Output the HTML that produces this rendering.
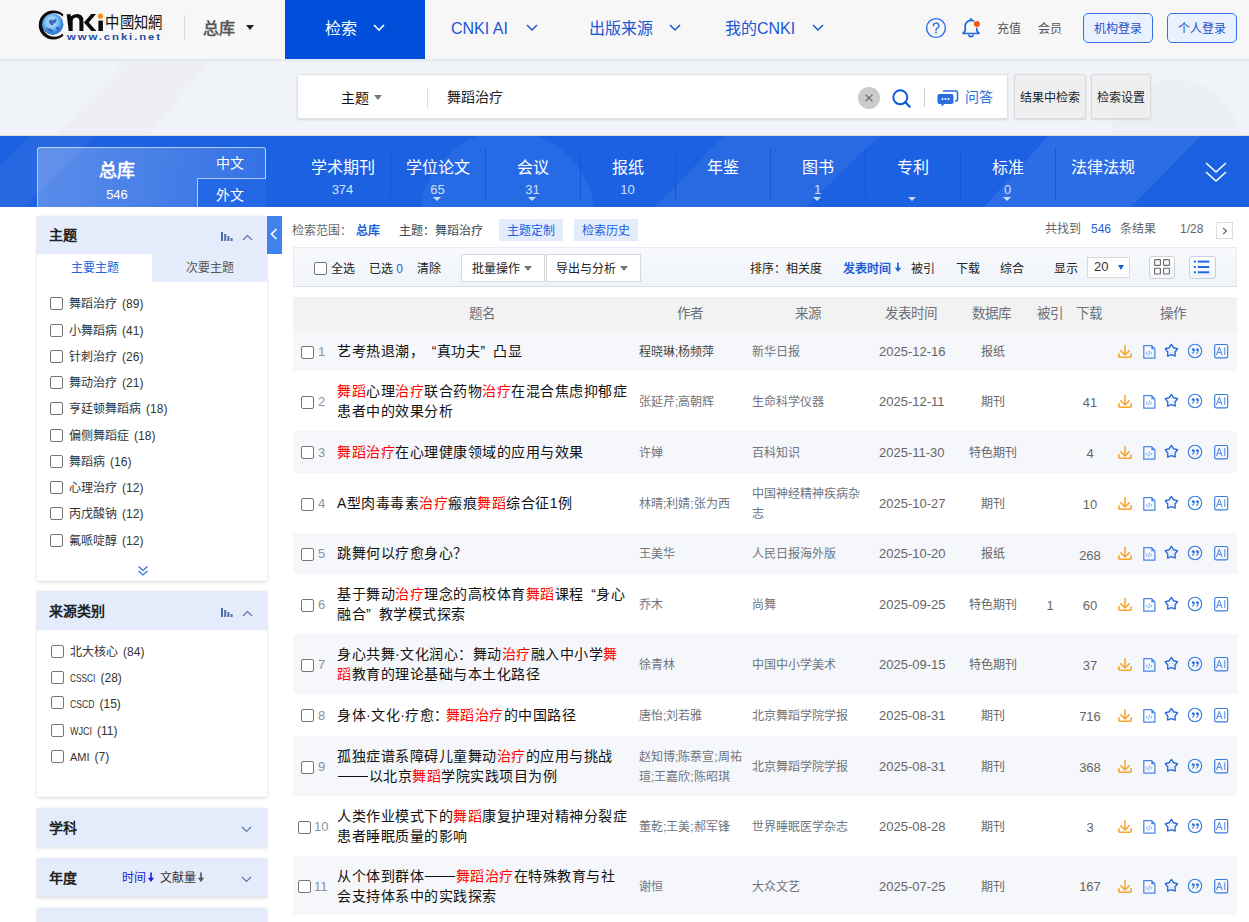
<!DOCTYPE html>
<html lang="zh-CN"><head><meta charset="utf-8"><title>CNKI</title>
<style>
*{margin:0;padding:0;box-sizing:border-box}
html,body{width:1249px;height:922px;overflow:hidden}
body{position:relative;font-family:"Liberation Sans",sans-serif;background:#fff;color:#333;font-size:12px}
.a{position:absolute;white-space:nowrap}
svg{position:absolute;overflow:visible}
/* header */
#hdr{position:absolute;left:0;top:0;width:1249px;height:59px;background:#f7f7f7;}
.nav{font-size:16px;color:#1a57d6;line-height:20px;top:19px}
.btn1{position:absolute;top:13px;height:30px;width:70px;border:1px solid #3f7fe3;border-radius:6px;background:#eaf1fe;color:#1c52c6;font-size:12px;line-height:30px;text-align:center;border-color:#3374e2;border-radius:5px}
/* search band */
#sband{position:absolute;left:0;top:59px;width:1249px;height:77px;background:#f0f3f8}
#sbox{position:absolute;left:297px;top:74px;width:711px;height:45px;background:#fff;border:1px solid #dde1e6;border-radius:2px;box-shadow:0 1px 2px rgba(0,0,0,.12)}
.gbtn{position:absolute;top:74px;height:45px;background:#efefef;border:1px solid #d9d9d9;border-radius:2px;box-shadow:0 1px 2px rgba(0,0,0,.1);font-size:12px;color:#222;line-height:46px;text-align:center}
/* blue band */
#bband{position:absolute;left:0;top:136px;width:1249px;height:71px;background:#1c61e2;overflow:hidden}
.cat{position:absolute;top:0;width:95px;height:71px;text-align:center;color:#fff}
.cat .t{position:absolute;left:0;width:95px;top:22px;font-size:16px;line-height:20px}
.cat .n{position:absolute;left:0;width:95px;top:46px;font-size:13px;line-height:16px;color:#cfe0fb}
.cat .tri{position:absolute;left:43px;top:61px;width:0;height:0;border-left:4px solid transparent;border-right:4px solid transparent;border-top:4px solid #c9dbf8}
.div{position:absolute;top:13px;width:1px;height:50px;background:#1553d2}

/* sidebar */
.panel{position:absolute;left:37px;width:230px;background:#fff;box-shadow:0 1px 3px rgba(0,0,0,.16)}
.phd{position:absolute;left:37px;width:230px;background:#e4ecfb}
.phd2{background:#e4ecfb}
.ph{font-size:14px;line-height:20px;font-weight:bold;color:#222}
.cb{position:absolute;width:13px;height:13px;border:1px solid #767676;border-radius:2px;background:#fff}
.si{font-size:12px;line-height:18px;color:#333;word-spacing:1.7px}
.nr{display:inline-block;font-size:11px;transform-origin:0 50%}
/* main */
.tag{position:absolute;top:219px;width:64px;height:22px;background:#e4ecfb;color:#1a5ee6;font-size:12px;line-height:24px;text-align:center}
.tb{top:260px;font-size:12px;line-height:18px;color:#222}
.tri5{top:266px;width:0;height:0;border-left:4.5px solid transparent;border-right:4.5px solid transparent;border-top:5px solid #777}
.th{top:305px;font-size:13.5px;line-height:18px;color:#6b707a}
.row{position:absolute;left:0;width:944px}
.row.g{background:#f5f7fa}
.num{font-size:13px;line-height:18px;color:#8a93a3}
.ttl{font-size:14px;line-height:20px;color:#111;letter-spacing:.5px}
.hl{color:#f00}
.lq{margin-left:7.8px}
.dash{display:inline-block;width:29.6px;height:1.2px;background:#111;vertical-align:middle;margin:0 1px 1px 1px}
.rq{margin-right:7.8px}
.au{font-size:12px;line-height:20px;color:#6f7480}
.au.dk{color:#444}
.src{font-size:12px;line-height:20px;color:#6f7480;white-space:nowrap}
.dt{font-size:13px;line-height:18px;color:#666}
.db{width:72px;text-align:center;font-size:12px;line-height:18px;color:#666}
.ci{width:24px;text-align:center;font-size:13px;line-height:18px;color:#666}
.dl{width:60px;text-align:center;font-size:13px;line-height:18px;color:#666}
.op{position:absolute}
.arr{font-family:"Liberation Sans",sans-serif}
</style></head><body>
<svg width="0" height="0" style="position:absolute;left:0;top:0">
<defs>
<symbol id="i-bar" viewBox="0 0 12 9"><g fill="#4f6ea8"><rect x="0" y="0" width="2" height="9"/><rect x="3.2" y="2" width="2" height="7"/><rect x="6.4" y="4" width="2" height="5"/><rect x="9.6" y="6.2" width="2" height="2.8"/></g></symbol>
<symbol id="i-dl" viewBox="0 0 16 16"><path d="M8 2 V12.2 M3.4 7.4 L8 12 L12.6 7.4" fill="none" stroke="#f7a52c" stroke-width="1.5"/><path d="M1.9 10.2 V13.3 Q1.9 14.2 2.8 14.2 H13.3 Q14.2 14.2 14.2 13.3 V10.2" fill="none" stroke="#f7a52c" stroke-width="1.6"/></symbol>
<symbol id="i-html" viewBox="0 0 16 16"><path d="M2.8 2.6 H10.6 L13.9 5.9 V15.2 H2.8 Z" fill="none" stroke="#4a86e8" stroke-width="1.25" stroke-linejoin="round"/><path d="M10.3 2.6 L13.9 6.2 H10.3 Z" fill="#4a86e8"/><path d="M6.6 8.6 L4.9 10.1 L6.6 11.6 M9.4 8.6 L11.1 10.1 L9.4 11.6 M8.7 7.4 L7.5 12.6" fill="none" stroke="#80aef0" stroke-width=".9"/></symbol>
<symbol id="i-star" viewBox="0 0 16 16"><path d="M8.4 1.4 L10.63 4.73 L14.5 5.8 L12.01 8.97 L12.2 13 L8.4 11.6 L4.6 13 L4.79 8.97 L2.3 5.8 L6.17 4.73 Z" fill="none" stroke="#2f6fdc" stroke-width="1.45" stroke-linejoin="round"/><g fill="#9dbcf0"><circle cx="8.4" cy="5.6" r=".5"/><circle cx="6.8" cy="7.4" r=".5"/><circle cx="10" cy="7.4" r=".5"/><circle cx="7.5" cy="9.3" r=".5"/><circle cx="9.3" cy="9.3" r=".5"/></g></symbol>
<symbol id="i-quote" viewBox="0 0 16 16"><circle cx="8" cy="8" r="6.7" fill="none" stroke="#3a7be0" stroke-width="1.1"/><circle cx="6.2" cy="6.6" r="1.35" fill="#2f6fdc"/><circle cx="10.3" cy="6.6" r="1.35" fill="#2f6fdc"/><path d="M7.4 6.7 Q7.3 9.2 5.3 10.5 M11.5 6.7 Q11.4 9.2 9.4 10.5" fill="none" stroke="#2f6fdc" stroke-width="1.05"/></symbol>
<symbol id="i-ai" viewBox="0 0 16 16"><rect x="1.7" y="1.5" width="13" height="13.4" rx="1.6" fill="none" stroke="#3a7be0" stroke-width="1.15"/><path d="M3.4 12.1 L6.3 4.2 L9.1 12.1 M4.5 9.4 H8.1 M11.8 4.2 V12.1" fill="none" stroke="#4a86e8" stroke-width="1"/></symbol>
</defs></svg>


<!-- ============ HEADER ============ -->
<div id="hdr"></div>
<!-- logo -->
<svg style="left:0;top:0;z-index:2" width="170" height="45" viewBox="0 0 170 45">
  <defs>
    <radialGradient id="glb" cx="45%" cy="40%" r="62%">
      <stop offset="0" stop-color="#d8f0ff"/><stop offset=".5" stop-color="#7cc0f5"/><stop offset=".85" stop-color="#2f7ad6"/><stop offset="1" stop-color="#3b86de"/>
    </radialGradient>
  </defs>
  <path d="M63.5 14.5 A 14.6 14.6 0 1 0 63.5 35.5 L 62.5 33.5 A 11.8 11.8 0 1 1 62.5 16.5 Z" fill="#0d0d0d"/>
  <circle cx="52.8" cy="24.3" r="10.6" fill="url(#glb)"/>
  <path d="M49 20.5 l2.5 -1.2 l2 1 l1.8 -1.5 l1.4 1 l-0.6 2.4 l-2.2 1.2 l-1.3 2.2 l-2.2 -0.8 l-1.6 -2.2 z M46 27 l2 1.5 l3 0.5 l2.5 2 l-2 0.8 l-3.5 -1.3 z M55.5 27.5 l2.5 -0.8 l1.5 2 l-2 1.6 z" fill="#1746a8" opacity=".75"/>
  <path d="M66.7 14.3 h4 v2.2 q2.6 -2.6 6.2 -2.6 q6.5 0 6.5 6.8 V31 h-4 V21.2 q0 -3.8 -3.2 -3.8 q-3.5 0 -3.5 4.2 V31 h-4 Z" fill="#0a0a0a"/>
  <path d="M96 14.1 h-4.8 l-7.2 8.5 l7.4 8.4 h5 l-7.6 -8.4 Z" fill="#0a0a0a"/>
  <rect x="98.4" y="20.6" width="4.5" height="10.4" fill="#0a0a0a"/>
  <circle cx="100.4" cy="16.2" r="2.6" fill="#f5901e"/>
  <text x="105.5" y="28.5" font-family="Liberation Serif, serif" font-size="14" font-weight="300" fill="#111" textLength="57" lengthAdjust="spacingAndGlyphs" transform="translate(0,-4.3) scale(1,1.15)">中國知網</text>
  <text x="67" y="39.8" font-family="Liberation Sans, sans-serif" font-weight="bold" font-size="9.5" fill="#1f4aa0" textLength="95" lengthAdjust="spacingAndGlyphs" letter-spacing="1.6">www.cnki.net</text>
</svg>
<div class="a" style="left:184px;top:15px;width:1px;height:25px;background:#d3dcea"></div>
<div class="a" style="left:203px;top:19px;font-size:16px;line-height:20px;color:#5a5a5a;font-weight:bold">总库</div>
<div class="a" style="left:246px;top:25px;width:0;height:0;border-left:4px solid transparent;border-right:4px solid transparent;border-top:5px solid #222"></div>

<div class="a" style="left:285px;top:0;width:140px;height:59px;background:#004fda"></div>
<div class="a" style="left:325px;top:19px;font-size:16px;line-height:20px;color:#fff">检索</div>
<svg style="left:373px;top:24px" width="12" height="8"><path d="M1 1 L6 6 L11 1" fill="none" stroke="#fff" stroke-width="1.6"/></svg>

<div class="a nav" style="left:451px">CNKI AI</div>
<svg style="left:526px;top:24px" width="12" height="8"><path d="M1 1 L6 6 L11 1" fill="none" stroke="#1b55c9" stroke-width="1.5"/></svg>
<div class="a nav" style="left:589px">出版来源</div>
<svg style="left:669px;top:24px" width="12" height="8"><path d="M1 1 L6 6 L11 1" fill="none" stroke="#1b55c9" stroke-width="1.5"/></svg>
<div class="a nav" style="left:725px">我的CNKI</div>
<svg style="left:812px;top:24px" width="12" height="8"><path d="M1 1 L6 6 L11 1" fill="none" stroke="#1b55c9" stroke-width="1.5"/></svg>

<!-- help icon -->
<svg style="left:925px;top:17px" width="22" height="22" viewBox="0 0 22 22"><circle cx="11" cy="11" r="9.4" fill="none" stroke="#2a6fe6" stroke-width="1.4"/><path d="M8.4 8.8 a2.7 2.7 0 1 1 4 2.3 q-1.4 .8 -1.4 2.2 v.5" fill="none" stroke="#2a6fe6" stroke-width="1.4" stroke-linecap="round"/><circle cx="11" cy="15.6" r=".95" fill="#2a6fe6"/></svg>
<!-- bell -->
<svg style="left:960px;top:16px" width="22" height="24" viewBox="0 0 22 24"><path d="M5.2 14.6 V10.2 a5.8 5.8 0 0 1 11.6 0 V14.6 q0 1.3 1.9 2 v.9 H3.3 v-.9 q1.9 -.7 1.9 -2 Z" fill="none" stroke="#1f66e0" stroke-width="1.7" stroke-linejoin="round"/><path d="M9.6 4.4 L11 2.3 L12.4 4.4 Z" fill="#1f66e0" stroke="#1f66e0" stroke-width="1"/><path d="M8.8 18.6 a2.2 2.2 0 0 0 4.4 0" fill="none" stroke="#1f66e0" stroke-width="1.6"/><circle cx="16.9" cy="7.9" r="3.9" fill="#f7f7f7"/><circle cx="16.9" cy="7.9" r="3" fill="#f9570f"/></svg>
<div class="a" style="left:997px;top:20px;font-size:12px;line-height:18px;color:#555">充值</div>
<div class="a" style="left:1038px;top:20px;font-size:12px;line-height:18px;color:#555">会员</div>
<div class="btn1" style="left:1083px">机构登录</div>
<div class="btn1" style="left:1167px">个人登录</div>

<!-- ============ SEARCH BAND ============ -->
<div id="sband"></div>
<div class="a" style="left:0;top:59px;width:1249px;height:77px;overflow:hidden">
  <div class="a" style="left:0;top:0;width:1249px;height:77px;background:rgba(190,180,185,.05);clip-path:polygon(127px 0,211px 0,149px 77px,55px 77px)"></div>
  <div class="a" style="left:1110px;top:20px;width:130px;height:130px;border-radius:50%;background:rgba(180,180,170,.06)"></div>
</div>
<div class="a" style="left:0;top:59px;width:1249px;height:4px;background:linear-gradient(#e3e8ef,rgba(240,243,248,0))"></div>
<div id="sbox"></div>
<div class="a" style="left:341px;top:88px;font-size:14px;line-height:20px;color:#111">主题</div>
<div class="a" style="left:374px;top:95px;width:0;height:0;border-left:4px solid transparent;border-right:4px solid transparent;border-top:5px solid #777"></div>
<div class="a" style="left:427px;top:88px;width:1px;height:20px;background:#ddd"></div>
<div class="a" style="left:447px;top:87px;font-size:14px;line-height:20px;color:#222">舞蹈治疗</div>
<svg style="left:858px;top:87px" width="22" height="22" viewBox="0 0 22 22"><circle cx="11" cy="11" r="11" fill="#cbcbcb"/><path d="M7.6 7.6 L14.4 14.4 M14.4 7.6 L7.6 14.4" stroke="#666" stroke-width="1.3"/></svg>
<svg style="left:892px;top:89px" width="20" height="19" viewBox="0 0 20 19"><circle cx="8.3" cy="8.3" r="7" fill="none" stroke="#0b5bd9" stroke-width="2"/><path d="M13.3 13.3 L17.8 17.8" stroke="#0b5bd9" stroke-width="2.2" stroke-linecap="round"/></svg>
<div class="a" style="left:924px;top:88px;width:1px;height:19px;background:#ccc"></div>
<svg style="left:937px;top:88px" width="22" height="19" viewBox="0 0 22 19"><path d="M6 3 h13 a1.5 1.5 0 0 1 1.5 1.5 v7 a1.5 1.5 0 0 1 -1.5 1.5 h-1" fill="none" stroke="#2a6fdc" stroke-width="1.6"/><path d="M2.5 6 h12 a2 2 0 0 1 2 2 v6 a2 2 0 0 1 -2 2 h-7 l-3 2.5 v-2.5 h-2 a2 2 0 0 1 -2 -2 v-6 a2 2 0 0 1 2 -2z" fill="#2a6fdc"/><circle cx="5.5" cy="11" r="1" fill="#fff"/><circle cx="8.5" cy="11" r="1" fill="#fff"/><circle cx="11.5" cy="11" r="1" fill="#fff"/></svg>
<div class="a" style="left:965px;top:87px;font-size:14px;line-height:20px;color:#2a6fdc">问答</div>
<div class="gbtn" style="left:1014px;width:72px">结果中检索</div>
<div class="gbtn" style="left:1091px;width:60px">检索设置</div>

<!-- ============ BLUE BAND ============ -->
<div id="bband"></div>

<div class="a" style="left:0;top:135px;width:1249px;height:1px;background:#e3ddd0"></div>
<div class="a" style="left:0;top:136px;width:1249px;height:71px;overflow:hidden">
  <div class="a" style="left:0;top:0;width:1249px;height:71px;background:rgba(255,255,255,.055);clip-path:polygon(30px 0,95px 0,24px 71px,-41px 71px)"></div>
  <div class="a" style="left:420px;top:-5px;width:175px;height:175px;border-radius:50%;background:rgba(110,170,255,.13)"></div>
  <div class="a" style="left:0;top:0;width:1249px;height:71px;background:rgba(255,255,255,.06);clip-path:polygon(724px 0,880px 0,805px 71px,655px 71px)"></div>
  <div class="a" style="left:0;top:0;width:1249px;height:71px;background:rgba(255,255,255,.07);clip-path:polygon(1048px 0,1201px 0,1131px 71px,984px 71px)"></div>
</div>
<!-- zongku box -->
<div class="a" style="left:37px;top:147px;width:229px;height:60px;border:1px solid rgba(255,255,255,.6);border-bottom:none;border-radius:3px 3px 0 0;background:linear-gradient(100deg,rgba(255,255,255,.28) 0%,rgba(255,255,255,.2) 50%,rgba(255,255,255,.1) 100%)"></div>
<div class="a" style="left:197px;top:178px;width:69px;height:29px;background:#2568e5;border-left:1px solid rgba(255,255,255,.65);border-top:1px solid rgba(255,255,255,.65)"></div>
<div class="a" style="left:37px;top:159px;width:160px;text-align:center;font-size:18px;line-height:24px;font-weight:bold;color:#fff">总库</div>
<div class="a" style="left:37px;top:187px;width:160px;text-align:center;font-size:13px;line-height:16px;color:#fff">546</div>
<div class="a" style="left:195px;top:154px;width:69px;text-align:center;font-size:14px;line-height:18px;color:#fff">中文</div>
<div class="a" style="left:195px;top:186px;width:69px;text-align:center;font-size:14px;line-height:18px;color:#fff">外文</div>
<!-- categories -->
<div class="a" style="left:295px;top:136px;width:950px;height:71px">
  <div class="cat" style="left:0"><div class="t">学术期刊</div><div class="n">374</div></div>
  <div class="div" style="left:95px"></div>
  <div class="cat" style="left:95px"><div class="t">学位论文</div><div class="n">65</div><div class="tri"></div></div>
  <div class="div" style="left:190px"></div>
  <div class="cat" style="left:190px"><div class="t">会议</div><div class="n">31</div><div class="tri"></div></div>
  <div class="div" style="left:285px"></div>
  <div class="cat" style="left:285px"><div class="t">报纸</div><div class="n">10</div></div>
  <div class="div" style="left:380px"></div>
  <div class="cat" style="left:380px"><div class="t">年鉴</div></div>
  <div class="div" style="left:475px"></div>
  <div class="cat" style="left:475px"><div class="t">图书</div><div class="n">1</div><div class="tri"></div></div>
  <div class="div" style="left:570px"></div>
  <div class="cat" style="left:570px"><div class="t">专利</div><div class="tri"></div></div>
  <div class="div" style="left:665px"></div>
  <div class="cat" style="left:665px"><div class="t">标准</div><div class="n">0</div><div class="tri"></div></div>
  <div class="div" style="left:760px"></div>
  <div class="cat" style="left:760px"><div class="t">法律法规</div></div>
</div>
<svg style="left:1204px;top:160px" width="24" height="26" viewBox="0 0 24 26"><path d="M2 3 L12 12 L22 3 M2 12 L12 21 L22 12" fill="none" stroke="#fff" stroke-width="1.6"/></svg>



















<!-- ============ SIDEBAR ============ -->
<div class="panel" style="top:216px;height:365px"></div>
<div class="phd" style="top:216px;height:38px"></div>
<div class="a ph" style="left:49px;top:225px">主题</div>
<svg style="left:221px;top:232px" width="12" height="9"><use href="#i-bar"/></svg>
<svg style="left:242px;top:234px" width="11" height="7"><path d="M1 6 L5.5 1.5 L10 6" fill="none" stroke="#5a74aa" stroke-width="1.2"/></svg>
<div class="a" style="left:267px;top:216px;width:15px;height:38px;background:#3f82ee"></div>
<svg style="left:269px;top:228px" width="10" height="12"><path d="M7.5 1 L2.5 6 L7.5 11" fill="none" stroke="#fff" stroke-width="1.7"/></svg>
<div class="a" style="left:152px;top:254px;width:115px;height:28px;background:#e4ecfb"></div>
<div class="a" style="left:37px;top:259px;width:115px;text-align:center;font-size:12px;line-height:18px;color:#1f62e0">主要主题</div>
<div class="a" style="left:152px;top:259px;width:115px;text-align:center;font-size:12px;line-height:18px;color:#555">次要主题</div>
<div class="cb" style="left:50px;top:297px"></div><div class="a si" style="left:69px;top:295px">舞蹈治疗 (89)</div>
<div class="cb" style="left:50px;top:324px"></div><div class="a si" style="left:69px;top:322px">小舞蹈病 (41)</div>
<div class="cb" style="left:50px;top:350px"></div><div class="a si" style="left:69px;top:348px">针刺治疗 (26)</div>
<div class="cb" style="left:50px;top:376px"></div><div class="a si" style="left:69px;top:374px">舞动治疗 (21)</div>
<div class="cb" style="left:50px;top:402px"></div><div class="a si" style="left:69px;top:400px">亨廷顿舞蹈病 (18)</div>
<div class="cb" style="left:50px;top:429px"></div><div class="a si" style="left:69px;top:427px">偏侧舞蹈症 (18)</div>
<div class="cb" style="left:50px;top:455px"></div><div class="a si" style="left:69px;top:453px">舞蹈病 (16)</div>
<div class="cb" style="left:50px;top:481px"></div><div class="a si" style="left:69px;top:479px">心理治疗 (12)</div>
<div class="cb" style="left:50px;top:507px"></div><div class="a si" style="left:69px;top:505px">丙戊酸钠 (12)</div>
<div class="cb" style="left:50px;top:534px"></div><div class="a si" style="left:69px;top:532px">氟哌啶醇 (12)</div>
<svg style="left:137px;top:565px" width="12" height="12"><path d="M1.5 1.5 L6 5.5 L10.5 1.5 M1.5 6 L6 10 L10.5 6" fill="none" stroke="#2f73e0" stroke-width="1.3"/></svg>

<div class="panel" style="top:591px;height:206px"></div>
<div class="phd" style="top:591px;height:39px"></div>
<div class="a ph" style="left:49px;top:601px">来源类别</div>
<svg style="left:221px;top:608px" width="12" height="9"><use href="#i-bar"/></svg>
<svg style="left:242px;top:610px" width="11" height="7"><path d="M1 6 L5.5 1.5 L10 6" fill="none" stroke="#5a74aa" stroke-width="1.2"/></svg>
<div class="cb" style="left:51px;top:645px"></div><div class="a si" style="left:70px;top:643px">北大核心 (84)</div>
<div class="cb" style="left:51px;top:671px"></div><div class="a si" style="left:70px;top:669px"><span class="nr" style="transform:scaleX(.756);margin-right:-8.2px">CSSCI</span> (28)</div>
<div class="cb" style="left:51px;top:696px"></div><div class="a si" style="left:70px;top:695px"><span class="nr" style="transform:scaleX(.785);margin-right:-6.7px">CSCD</span> (15)</div>
<div class="cb" style="left:51px;top:724px"></div><div class="a si" style="left:70px;top:722px"><span class="nr" style="transform:scaleX(.82);margin-right:-4.9px">WJCI</span> (11)</div>
<div class="cb" style="left:51px;top:750px"></div><div class="a si" style="left:70px;top:748px"><span class="nr">AMI</span> (7)</div>

<div class="panel phd2" style="top:808px;height:39px"></div>
<div class="a ph" style="left:49px;top:818px">学科</div>
<svg style="left:241px;top:826px" width="11" height="7"><path d="M1 1 L5.5 5.5 L10 1" fill="none" stroke="#5a74aa" stroke-width="1.2"/></svg>
<div class="panel phd2" style="top:858px;height:39px"></div>
<div class="a ph" style="left:49px;top:868px">年度</div>
<div class="a" style="left:122px;top:869px;font-size:12px;line-height:18px;color:#2222cc">时间</div><svg style="left:147px;top:872px" width="8" height="11"><path d="M4 0.5 V9" stroke="#2222cc" stroke-width="1.6"/><path d="M0.8 5.8 L4 10 L7.2 5.8 Z" fill="#2222cc"/></svg>
<div class="a" style="left:160px;top:869px;font-size:12px;line-height:18px;color:#333">文献量</div><svg style="left:197px;top:872px" width="8" height="11"><path d="M4 0.5 V9" stroke="#555" stroke-width="1.6"/><path d="M0.8 5.8 L4 10 L7.2 5.8 Z" fill="#555"/></svg>
<svg style="left:241px;top:876px" width="11" height="7"><path d="M1 1 L5.5 5.5 L10 1" fill="none" stroke="#5a74aa" stroke-width="1.2"/></svg>
<div class="panel phd2" style="top:908px;height:39px"></div>

<!-- ============ MAIN ============ -->
<div class="a" style="left:292px;top:222px;font-size:12px;line-height:18px;color:#666">检索范围：</div>
<div class="a" style="left:356px;top:222px;font-size:12px;line-height:18px;color:#1f5fd6;font-weight:bold">总库</div>
<div class="a" style="left:399px;top:222px;font-size:12px;line-height:18px;color:#444">主题：舞蹈治疗</div>
<div class="tag" style="left:499px">主题定制</div>
<div class="tag" style="left:574px">检索历史</div>
<div class="a" style="left:1045px;top:220px;font-size:12px;line-height:18px;color:#666">共找到</div>
<div class="a" style="left:1091px;top:220px;font-size:12px;line-height:18px;color:#1f5fd6">546</div>
<div class="a" style="left:1120px;top:220px;font-size:12px;line-height:18px;color:#666">条结果</div>
<div class="a" style="left:1180px;top:220px;font-size:12px;line-height:18px;color:#666">1/28</div>
<div class="a" style="left:1216px;top:222px;width:17px;height:17px;border:1px solid #ddd;background:#fff"></div>
<svg style="left:1221px;top:227px" width="8" height="8"><path d="M2 1 L5.5 4 L2 7" fill="none" stroke="#666" stroke-width="1.1"/></svg>

<div class="a" style="left:293px;top:247px;width:944px;height:40px;background:linear-gradient(#f8fafd,#eff3f8);border:1px solid #e8ecf2;border-bottom-color:#d9e0ea"></div>
<div class="cb" style="left:314px;top:262px"></div>
<div class="a tb" style="left:331px">全选</div>
<div class="a tb" style="left:369px">已选 <span style="color:#1f5fd6">0</span></div>
<div class="a tb" style="left:417px">清除</div>
<div class="a" style="left:461px;top:254px;width:84px;height:28px;background:#fff;border:1px solid #d9d9d9"></div>
<div class="a" style="left:546px;top:254px;width:95px;height:28px;background:#fff;border:1px solid #d9d9d9"></div>
<div class="a tb" style="left:472px">批量操作</div>
<div class="a tri5" style="left:524px"></div>
<div class="a tb" style="left:556px">导出与分析</div>
<div class="a tri5" style="left:620px"></div>
<div class="a tb" style="left:750px">排序：相关度</div>
<div class="a tb" style="left:843px;color:#1f5fd6;font-weight:bold">发表时间</div><svg style="left:894px;top:262px" width="8" height="11"><path d="M4 0.5 V9" stroke="#1f5fd6" stroke-width="1.6"/><path d="M0.8 5.8 L4 10 L7.2 5.8 Z" fill="#1f5fd6"/></svg>
<div class="a tb" style="left:911px">被引</div>
<div class="a tb" style="left:956px">下载</div>
<div class="a tb" style="left:1000px">综合</div>
<div class="a tb" style="left:1054px">显示</div>
<div class="a" style="left:1087px;top:257px;width:43px;height:21px;background:#fff;border:1px solid #d9d9d9"></div>
<div class="a" style="left:1094px;top:258px;font-size:13px;line-height:18px;color:#333">20</div>
<div class="a" style="left:1118px;top:265px;width:0;height:0;border-left:3.5px solid transparent;border-right:3.5px solid transparent;border-top:5px solid #1f5fd6"></div>
<div class="a" style="left:1149px;top:256px;width:26px;height:23px;background:linear-gradient(#fff,#f3f5f8);border:1px solid #d0d0d0;border-radius:3px"></div>
<svg style="left:1154px;top:259px" width="17" height="16"><g fill="none" stroke="#6a6a6a" stroke-width="1.1"><rect x="0.6" y="0.6" width="5.8" height="5.8" rx=".6"/><rect x="9.6" y="0.6" width="5.8" height="5.8" rx=".6"/><rect x="0.6" y="9.2" width="5.8" height="5.8" rx=".6"/><rect x="9.6" y="9.2" width="5.8" height="5.8" rx=".6"/></g></svg>
<div class="a" style="left:1189px;top:256px;width:27px;height:23px;background:linear-gradient(#fff,#f0f3f8);border:1px solid #c5d0e0;border-radius:3px"></div>
<svg style="left:1193px;top:260px" width="18" height="14"><g fill="#1e6ae6"><rect x="0.8" y="0.6" width="2" height="2"/><rect x="0.8" y="6" width="2" height="2"/><rect x="0.8" y="11.3" width="2" height="2"/><rect x="4.8" y="0.6" width="11.5" height="2"/><rect x="4.8" y="6" width="11.5" height="2"/><rect x="4.8" y="11.3" width="11.5" height="2"/></g></svg>

<div class="a" style="left:293px;top:297px;width:944px;height:34px;background:#f2f2f2"></div>
<div class="a th" style="left:469px">题名</div>
<div class="a th" style="left:677px">作者</div>
<div class="a th" style="left:795px">来源</div>
<div class="a th" style="left:885px">发表时间</div>
<div class="a th" style="left:972px">数据库</div>
<div class="a th" style="left:1037px">被引</div>
<div class="a th" style="left:1076px">下载</div>
<div class="a th" style="left:1160px">操作</div>
<div class="a" style="left:293px;top:0;width:944px;height:922px">
<div class="row g" style="top:331px;height:40px">
<div class="cb" style="left:8px;top:15px"></div>
<div class="a num" style="left:25px;top:12px">1</div>
<div class="a ttl" style="left:44px;top:10px">艺考热退潮，<span class="lq">“</span>真功夫<span class="rq">”</span>凸显</div>
<div class="a au dk" style="left:346px;top:11px">程晓琳;杨频萍</div>
<div class="a src" style="left:459px;top:11px">新华日报</div>
<div class="a dt" style="left:586px;top:12px">2025-12-16</div>
<div class="a db" style="left:664px;top:12px">报纸</div>
<svg class="op"  style="top:12px;left:824px" width="16" height="16"><use href="#i-dl"/></svg><svg class="op"  style="top:12px;left:848px" width="16" height="16"><use href="#i-html"/></svg><svg class="op"  style="top:12px;left:870px" width="16" height="16"><use href="#i-star"/></svg><svg class="op"  style="top:12px;left:894px" width="16" height="16"><use href="#i-quote"/></svg><svg class="op"  style="top:12px;left:920px" width="16" height="16"><use href="#i-ai"/></svg>
</div>
<div class="row" style="top:371px;height:60px">
<div class="cb" style="left:8px;top:25px"></div>
<div class="a num" style="left:25px;top:22px">2</div>
<div class="a ttl" style="left:44px;top:10px"><span class="hl">舞蹈</span>心理<span class="hl">治疗</span>联合药物<span class="hl">治疗</span>在混合焦虑抑郁症<br>患者中的效果分析</div>
<div class="a au" style="left:346px;top:21px">张延芹;高朝辉</div>
<div class="a src" style="left:459px;top:21px">生命科学仪器</div>
<div class="a dt" style="left:586px;top:22px">2025-12-11</div>
<div class="a db" style="left:664px;top:22px">期刊</div>
<div class="a dl" style="left:767px;top:23px">41</div>
<svg class="op"  style="top:22px;left:824px" width="16" height="16"><use href="#i-dl"/></svg><svg class="op"  style="top:22px;left:848px" width="16" height="16"><use href="#i-html"/></svg><svg class="op"  style="top:22px;left:870px" width="16" height="16"><use href="#i-star"/></svg><svg class="op"  style="top:22px;left:894px" width="16" height="16"><use href="#i-quote"/></svg><svg class="op"  style="top:22px;left:920px" width="16" height="16"><use href="#i-ai"/></svg>
</div>
<div class="row g" style="top:431px;height:42px">
<div class="cb" style="left:8px;top:15px"></div>
<div class="a num" style="left:25px;top:13px">3</div>
<div class="a ttl" style="left:44px;top:11px"><span class="hl">舞蹈治疗</span>在心理健康领域的应用与效果</div>
<div class="a au" style="left:346px;top:12px">许婵</div>
<div class="a src" style="left:459px;top:12px">百科知识</div>
<div class="a dt" style="left:586px;top:13px">2025-11-30</div>
<div class="a db" style="left:664px;top:13px">特色期刊</div>
<div class="a dl" style="left:767px;top:14px">4</div>
<svg class="op"  style="top:13px;left:824px" width="16" height="16"><use href="#i-dl"/></svg><svg class="op"  style="top:13px;left:848px" width="16" height="16"><use href="#i-html"/></svg><svg class="op"  style="top:13px;left:870px" width="16" height="16"><use href="#i-star"/></svg><svg class="op"  style="top:13px;left:894px" width="16" height="16"><use href="#i-quote"/></svg><svg class="op"  style="top:13px;left:920px" width="16" height="16"><use href="#i-ai"/></svg>
</div>
<div class="row" style="top:473px;height:60px">
<div class="cb" style="left:8px;top:25px"></div>
<div class="a num" style="left:25px;top:22px">4</div>
<div class="a ttl" style="left:44px;top:20px">A型肉毒毒素<span class="hl">治疗</span>瘢痕<span class="hl">舞蹈</span>综合征1例</div>
<div class="a au" style="left:346px;top:21px">林晴;利婧;张为西</div>
<div class="a src" style="left:459px;top:11px">中国神经精神疾病杂<br>志</div>
<div class="a dt" style="left:586px;top:22px">2025-10-27</div>
<div class="a db" style="left:664px;top:22px">期刊</div>
<div class="a dl" style="left:767px;top:23px">10</div>
<svg class="op"  style="top:22px;left:824px" width="16" height="16"><use href="#i-dl"/></svg><svg class="op"  style="top:22px;left:848px" width="16" height="16"><use href="#i-html"/></svg><svg class="op"  style="top:22px;left:870px" width="16" height="16"><use href="#i-star"/></svg><svg class="op"  style="top:22px;left:894px" width="16" height="16"><use href="#i-quote"/></svg><svg class="op"  style="top:22px;left:920px" width="16" height="16"><use href="#i-ai"/></svg>
</div>
<div class="row g" style="top:533px;height:41px">
<div class="cb" style="left:8px;top:15px"></div>
<div class="a num" style="left:25px;top:12px">5</div>
<div class="a ttl" style="left:44px;top:10px">跳舞何以疗愈身心？</div>
<div class="a au" style="left:346px;top:11px">王美华</div>
<div class="a src" style="left:459px;top:11px">人民日报海外版</div>
<div class="a dt" style="left:586px;top:12px">2025-10-20</div>
<div class="a db" style="left:664px;top:12px">报纸</div>
<div class="a dl" style="left:767px;top:14px">268</div>
<svg class="op"  style="top:12px;left:824px" width="16" height="16"><use href="#i-dl"/></svg><svg class="op"  style="top:12px;left:848px" width="16" height="16"><use href="#i-html"/></svg><svg class="op"  style="top:12px;left:870px" width="16" height="16"><use href="#i-star"/></svg><svg class="op"  style="top:12px;left:894px" width="16" height="16"><use href="#i-quote"/></svg><svg class="op"  style="top:12px;left:920px" width="16" height="16"><use href="#i-ai"/></svg>
</div>
<div class="row" style="top:574px;height:60px">
<div class="cb" style="left:8px;top:25px"></div>
<div class="a num" style="left:25px;top:22px">6</div>
<div class="a ttl" style="left:44px;top:10px">基于舞动<span class="hl">治疗</span>理念的高校体育<span class="hl">舞蹈</span>课程<span class="lq">“</span>身心<br>融合<span class="rq">”</span>教学模式探索</div>
<div class="a au" style="left:346px;top:21px">乔木</div>
<div class="a src" style="left:459px;top:21px">尚舞</div>
<div class="a dt" style="left:586px;top:22px">2025-09-25</div>
<div class="a db" style="left:664px;top:22px">特色期刊</div>
<div class="a ci" style="left:745px;top:23px">1</div>
<div class="a dl" style="left:767px;top:23px">60</div>
<svg class="op"  style="top:22px;left:824px" width="16" height="16"><use href="#i-dl"/></svg><svg class="op"  style="top:22px;left:848px" width="16" height="16"><use href="#i-html"/></svg><svg class="op"  style="top:22px;left:870px" width="16" height="16"><use href="#i-star"/></svg><svg class="op"  style="top:22px;left:894px" width="16" height="16"><use href="#i-quote"/></svg><svg class="op"  style="top:22px;left:920px" width="16" height="16"><use href="#i-ai"/></svg>
</div>
<div class="row g" style="top:634px;height:60px">
<div class="cb" style="left:8px;top:25px"></div>
<div class="a num" style="left:25px;top:22px">7</div>
<div class="a ttl" style="left:44px;top:10px">身心共舞·文化润心：舞动<span class="hl">治疗</span>融入中小学<span class="hl">舞</span><br><span class="hl">蹈</span>教育的理论基础与本土化路径</div>
<div class="a au" style="left:346px;top:21px">徐青林</div>
<div class="a src" style="left:459px;top:21px">中国中小学美术</div>
<div class="a dt" style="left:586px;top:22px">2025-09-15</div>
<div class="a db" style="left:664px;top:22px">特色期刊</div>
<div class="a dl" style="left:767px;top:23px">37</div>
<svg class="op"  style="top:22px;left:824px" width="16" height="16"><use href="#i-dl"/></svg><svg class="op"  style="top:22px;left:848px" width="16" height="16"><use href="#i-html"/></svg><svg class="op"  style="top:22px;left:870px" width="16" height="16"><use href="#i-star"/></svg><svg class="op"  style="top:22px;left:894px" width="16" height="16"><use href="#i-quote"/></svg><svg class="op"  style="top:22px;left:920px" width="16" height="16"><use href="#i-ai"/></svg>
</div>
<div class="row" style="top:694px;height:42px">
<div class="cb" style="left:8px;top:15px"></div>
<div class="a num" style="left:25px;top:13px">8</div>
<div class="a ttl" style="left:44px;top:11px">身体·文化·疗愈<span style="margin-right:-3px">：</span><span class="hl">舞蹈治疗</span>的中国路径</div>
<div class="a au" style="left:346px;top:12px">唐怡;刘若雅</div>
<div class="a src" style="left:459px;top:12px">北京舞蹈学院学报</div>
<div class="a dt" style="left:586px;top:13px">2025-08-31</div>
<div class="a db" style="left:664px;top:13px">期刊</div>
<div class="a dl" style="left:767px;top:14px">716</div>
<svg class="op"  style="top:13px;left:824px" width="16" height="16"><use href="#i-dl"/></svg><svg class="op"  style="top:13px;left:848px" width="16" height="16"><use href="#i-html"/></svg><svg class="op"  style="top:13px;left:870px" width="16" height="16"><use href="#i-star"/></svg><svg class="op"  style="top:13px;left:894px" width="16" height="16"><use href="#i-quote"/></svg><svg class="op"  style="top:13px;left:920px" width="16" height="16"><use href="#i-ai"/></svg>
</div>
<div class="row g" style="top:736px;height:60px">
<div class="cb" style="left:8px;top:25px"></div>
<div class="a num" style="left:25px;top:22px">9</div>
<div class="a ttl" style="left:44px;top:10px">孤独症谱系障碍儿童舞动<span class="hl">治疗</span>的应用与挑战<br><span class="dash"></span>以北京<span class="hl">舞蹈</span>学院实践项目为例</div>
<div class="a au" style="left:346px;top:11px">赵知博;陈萘宣;周祐<br>瑄;王嘉欣;陈昭琪</div>
<div class="a src" style="left:459px;top:21px">北京舞蹈学院学报</div>
<div class="a dt" style="left:586px;top:22px">2025-08-31</div>
<div class="a db" style="left:664px;top:22px">期刊</div>
<div class="a dl" style="left:767px;top:23px">368</div>
<svg class="op"  style="top:22px;left:824px" width="16" height="16"><use href="#i-dl"/></svg><svg class="op"  style="top:22px;left:848px" width="16" height="16"><use href="#i-html"/></svg><svg class="op"  style="top:22px;left:870px" width="16" height="16"><use href="#i-star"/></svg><svg class="op"  style="top:22px;left:894px" width="16" height="16"><use href="#i-quote"/></svg><svg class="op"  style="top:22px;left:920px" width="16" height="16"><use href="#i-ai"/></svg>
</div>
<div class="row" style="top:796px;height:60px">
<div class="cb" style="left:5px;top:25px"></div>
<div class="a num" style="left:21px;top:22px">10</div>
<div class="a ttl" style="left:44px;top:10px">人类作业模式下的<span class="hl">舞蹈</span>康复护理对精神分裂症<br>患者睡眠质量的影响</div>
<div class="a au" style="left:346px;top:21px">董乾;王美;郝军锋</div>
<div class="a src" style="left:459px;top:21px">世界睡眠医学杂志</div>
<div class="a dt" style="left:586px;top:22px">2025-08-28</div>
<div class="a db" style="left:664px;top:22px">期刊</div>
<div class="a dl" style="left:767px;top:23px">3</div>
<svg class="op"  style="top:22px;left:824px" width="16" height="16"><use href="#i-dl"/></svg><svg class="op"  style="top:22px;left:848px" width="16" height="16"><use href="#i-html"/></svg><svg class="op"  style="top:22px;left:870px" width="16" height="16"><use href="#i-star"/></svg><svg class="op"  style="top:22px;left:894px" width="16" height="16"><use href="#i-quote"/></svg><svg class="op"  style="top:22px;left:920px" width="16" height="16"><use href="#i-ai"/></svg>
</div>
<div class="row g" style="top:856px;height:59px">
<div class="cb" style="left:5px;top:24px"></div>
<div class="a num" style="left:21px;top:22px">11</div>
<div class="a ttl" style="left:44px;top:10px">从个体到群体<span class="dash"></span><span class="hl">舞蹈治疗</span>在特殊教育与社<br>会支持体系中的实践探索</div>
<div class="a au" style="left:346px;top:21px">谢恒</div>
<div class="a src" style="left:459px;top:21px">大众文艺</div>
<div class="a dt" style="left:586px;top:22px">2025-07-25</div>
<div class="a db" style="left:664px;top:22px">期刊</div>
<div class="a dl" style="left:767px;top:22px">167</div>
<svg class="op"  style="top:22px;left:824px" width="16" height="16"><use href="#i-dl"/></svg><svg class="op"  style="top:22px;left:848px" width="16" height="16"><use href="#i-html"/></svg><svg class="op"  style="top:22px;left:870px" width="16" height="16"><use href="#i-star"/></svg><svg class="op"  style="top:22px;left:894px" width="16" height="16"><use href="#i-quote"/></svg><svg class="op"  style="top:22px;left:920px" width="16" height="16"><use href="#i-ai"/></svg>
</div>
</div>
</body></html>
